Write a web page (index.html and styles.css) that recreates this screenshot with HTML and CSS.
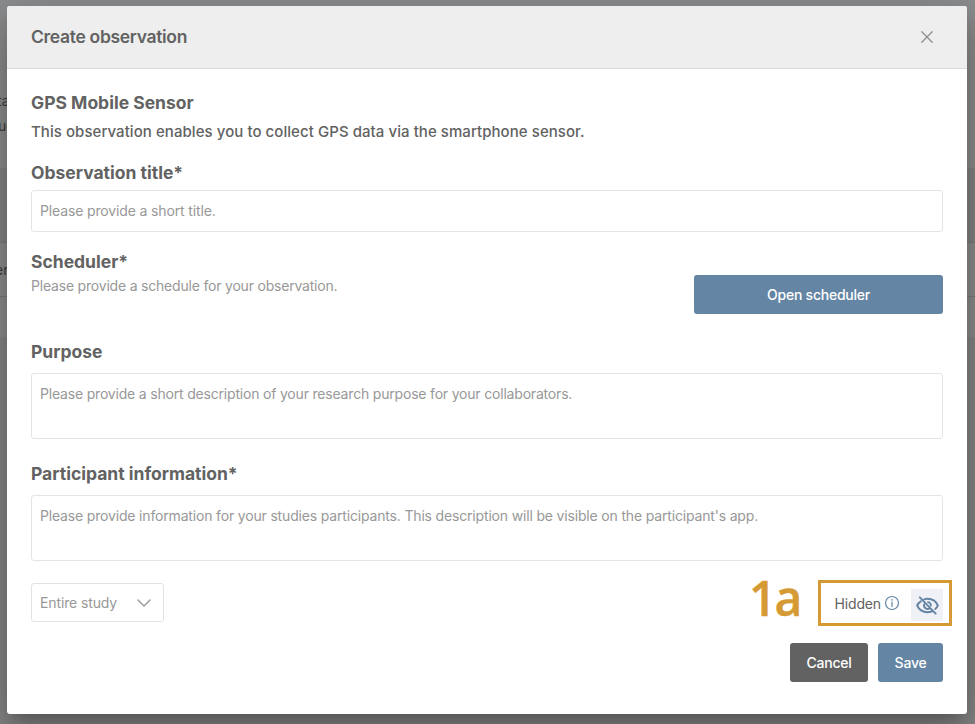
FILE: index.html
```html
<!DOCTYPE html>
<html lang="en">
<head>
<meta charset="utf-8">
<title>Create observation</title>
<link rel="stylesheet" href="styles.css">
</head>
<body>
<div class="backdrop">
  <div class="page-top"></div>
  <div class="page-intro"><span class="shift">ta</span><span>uc</span></div>
  <div class="page-gap"></div>
  <div class="page-row"><span class="shift-row">er</span></div>
  <div class="page-row short"></div>
  <div class="page-rest"></div>
</div>
<div class="dialog" role="dialog">
  <header class="dialog-header">
    <h1>Create observation</h1>
    <svg class="close" viewBox="0 0 12 12"><path d="M.8.8l10.400 10.400M11.200.8L.8 11.200"/></svg>
  </header>
  <main class="dialog-body">
    <h2>GPS Mobile Sensor</h2>
    <p class="lead">This observation enables you to collect GPS data via the smartphone sensor.</p>
    <h2 class="title-label">Observation title*</h2>
    <div class="field input">Please provide a short title.</div>
    <section class="scheduler">
      <div>
        <h2>Scheduler*</h2>
        <p class="hint">Please provide a schedule for your observation.</p>
      </div>
      <button class="btn open">Open scheduler</button>
    </section>
    <h2>Purpose</h2>
    <div class="field area purpose">Please provide a short description of your research purpose for your collaborators.</div>
    <h2 class="info-label">Participant information*</h2>
    <div class="field area">Please provide information for your studies participants. This description will be visible on the participant's app.</div>
    <div class="options">
      <div class="select"><span>Entire study</span>
        <svg class="chevron" viewBox="0 0 14 8"><path d="M1 .9l6 6 6-6"/></svg>
      </div>
      <div class="callout">
        <strong>1a</strong>
        <div class="hidden-box">
          <span>Hidden</span>
          <svg class="info" viewBox="0 0 14 14"><circle cx="7" cy="7" r="6.5"/><path d="M7 6v4.400M7 3.400v.8"/></svg>
          <span class="toggle"><svg viewBox="0 0 24 24"><path d="M5 7.700C3.200 8.900 1.900 10.400 1.200 12c1.900 4.300 6 7 10.800 7 1.700 0 3.300-.4 4.800-1M8.500 5.600C9.600 5.200 10.800 5 12 5c4.800 0 8.900 2.700 10.800 7-.6 1.400-1.500 2.600-2.700 3.600M12.600 8.500a3.500 3.500 0 0 1 2.900 3.500M8.500 10.900a3.700 3.700 0 0 0 5.800 3.900M4 3.500l16.500 17"/></svg></span>
        </div>
      </div>
    </div>
    <footer class="actions">
      <button class="btn cancel">Cancel</button>
      <button class="btn save">Save</button>
    </footer>
  </main>
</div>
</body>
</html>
```
FILE: styles.css
```css
* { box-sizing: border-box; }
body {
  margin: 0;
  height: 724px;
  overflow: hidden;
  display: grid;
  font-family: Inter, "Liberation Sans", sans-serif;
  font-size: 14px;
  color: #626262;
  background: #888;
}
h1, h2, p { margin: 0; }
.backdrop, .dialog { grid-area: 1 / 1; }
.backdrop {
  overflow: hidden;
  display: flex;
  flex-direction: column;
  color: #3b3b3b;
  background: #8b8b8b;
}
.page-top { height: 18px; background: #8b8d8f; }
.page-intro {
  height: 150px;
  padding-top: 70px;
  display: flex;
  flex-direction: column;
  line-height: 25px;
}
.shift { margin-left: -3px; }
.page-intro span:last-child { margin-left: -2px; }
.shift-row { margin-left: -5px; }
.page-gap { height: 74px; background: #838383; }
.page-row {
  height: 54px;
  line-height: 54px;
  border-top: 1px solid #7a7a7a;
  display: flex;
}
.page-row.short { height: 41px; }
.page-rest { flex: 1; background: #858585; }
.dialog {
  width: 960px;
  height: 708px;
  margin: 6px 0 0 7px;
  background: #fff;
  border-radius: 3px;
  overflow: hidden;
  box-shadow: 0 11px 15px -7px rgba(0,0,0,.2), 0 24px 38px 3px rgba(0,0,0,.14), 0 9px 46px 8px rgba(0,0,0,.12);
}
.dialog-header {
  height: 63px;
  padding: 0 34px 0 24px;
  display: flex;
  align-items: center;
  justify-content: space-between;
  background: #eee;
  border-bottom: 1px solid #dcdcdc;
}
h1 { font-size: 17.5px; line-height: 22px; font-weight: 600; letter-spacing: -.32px; }
h2 { font-size: 17.5px; line-height: 24px; font-weight: 700; }
svg { fill: none; stroke: currentColor; stroke-linecap: round; stroke-linejoin: round; }
.close { width: 12px; height: 12px; color: #8f8f8f; stroke-width: 1.3; }
.dialog-body { padding: 22px 24px 0; }
.lead { margin-top: 6px; font-size: 15px; line-height: 22px; font-weight: 500; letter-spacing: .06px; }
.title-label { margin-top: 18px; }
.field {
  border: 1px solid #e1e5e8;
  border-radius: 3px;
  padding: 0 8px;
  color: #989898;
  letter-spacing: -.17px;
}
.input { height: 42px; margin-top: 5px; line-height: 40px; letter-spacing: -.14px; }
.area { height: 66px; margin-top: 9px; padding-top: 10px; line-height: 20px; }
.purpose { letter-spacing: -.19px; }
.scheduler {
  height: 90px;
  margin-top: 18px;
  display: flex;
  justify-content: space-between;
}
.hint { color: #989898; line-height: 20px; margin-top: 2px; letter-spacing: -.2px; }
.btn {
  height: 39px;
  padding: 0;
  border: 0;
  border-radius: 3px;
  font: 500 14px Inter, "Liberation Sans", sans-serif;
  letter-spacing: -.25px;
  color: #fff;
  background: #6485a4;
}
.open { width: 249px; margin-top: 25px; }
.info-label { margin-top: 23px; }
.options {
  margin-top: 19px;
  height: 46px;
  display: flex;
  justify-content: space-between;
}
.select {
  width: 133px;
  height: 39px;
  margin-top: 3px;
  padding: 0 12px 0 8px;
  display: flex;
  align-items: center;
  justify-content: space-between;
  border: 1px solid #e2e2e2;
  border-radius: 3px;
  color: #989898;
  letter-spacing: -.12px;
}
.chevron { width: 14px; height: 8px; stroke-width: 1.4; }
.callout { display: flex; margin-right: -9px; }
.callout strong {
  width: 69px;
  font: 600 48px/36px "Open Sans", sans-serif;
  letter-spacing: -2px;
  color: #d69a35;
  -webkit-text-stroke: .5px #d69a35;
}
.hidden-box {
  width: 134px;
  height: 46px;
  border: 3px solid #d69a35;
  padding: 0 6px 0 13.5px;
  display: flex;
  align-items: center;
  letter-spacing: -.15px;
}
.info { width: 14px; height: 14px; margin-left: 4px; color: #6485a4; stroke-width: 1.2; overflow: visible; }
.toggle {
  width: 32px;
  height: 32px;
  margin: 4px 0 0 auto;
  display: grid;
  place-items: center;
  color: #6485a4;
  background: #f0f1f6;
}
.toggle svg { width: 23px; height: 23px; stroke-width: 2; }
.actions { margin-top: 17px; display: flex; justify-content: flex-end; gap: 10px; }
.cancel { width: 78px; background: #626262; }
.save { width: 65px; }
```
